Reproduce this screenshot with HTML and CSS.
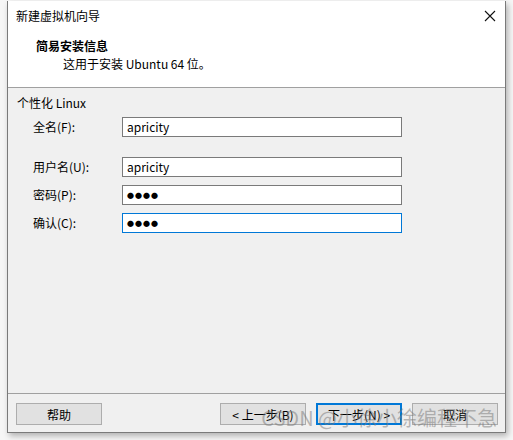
FILE: index.html
```html
<!DOCTYPE html>
<html>
<head>
<meta charset="utf-8">
<link rel="stylesheet" href="styles.css">
</head>
<body>
<div class="window">
  <div class="titlebar">
    <span class="title">新建虚拟机向导</span>
    <svg class="close" width="12" height="12" viewBox="0 0 12 12"><path d="M1 1L11 11M11 1L1 11" stroke="#111" stroke-width="1.1"/></svg>
  </div>
  <div class="header">
    <div class="h-title">简易安装信息</div>
    <div class="h-sub">这用于安装 Ubuntu 64 位。</div>
  </div>
  <div class="content">
    <div class="group">个性化 Linux</div>
    <div class="form">
      <label class="lbl">全名(F):</label><div class="field">apricity</div>
      <div class="spacer"></div>
      <label class="lbl">用户名(U):</label><div class="field">apricity</div>
      <label class="lbl">密码(P):</label><div class="field dots">●●●●</div>
      <label class="lbl">确认(C):</label><div class="field dots focus">●●●●</div>
    </div>
  </div>
  <div class="footer">
    <button class="btn">帮助</button>
    <div class="grow"></div>
    <button class="btn">&lt; 上一步(B)</button>
    <button class="btn primary">下一步(N) &gt;</button>
    <button class="btn">取消</button>
  </div>
  <div class="watermark">CSDN @小徐小徐编程不急</div>
</div>
</body>
</html>
```
FILE: styles.css
```css
html, body {
  margin: 0;
  padding: 0;
  background: #f6f6f6;
  width: 513px;
  height: 440px;
  overflow: hidden;
  font-family: "Noto Sans CJK SC", "Noto Sans", sans-serif;
  font-size: 12px;
  color: #000;
}
.window {
  position: relative;
  box-sizing: border-box;
  margin: 1px 0 0 7px;
  width: 499px;
  height: 432px;
  border: 1px solid #7a7a7a;
  border-top: none;
  background: #f0f0f0;
  display: flex;
  flex-direction: column;
  box-shadow: 2px 3px 6px rgba(0,0,0,0.28);
}
.titlebar {
  height: 30px;
  background: #fff;
  display: flex;
  align-items: center;
  padding: 0 9px 0 8px;
}
.title { flex: 1; line-height: 16px; }
.close { display: block; }
.header {
  background: #fff;
  height: 56px;
  border-bottom: 1px solid #a0a0a0;
  padding-left: 28px;
}
.h-title { font-weight: bold; line-height: 16px; margin-top: 7px; }
.h-sub { line-height: 16px; margin-top: 2px; padding-left: 27px; }
.content {
  flex: 1;
  padding: 7px 0 0 9px;
}
.group { line-height: 16px; }
.form {
  display: grid;
  grid-template-columns: 89px 280px;
  row-gap: 8px;
  margin-top: 6px;
  padding-left: 16px;
  align-items: center;
}
.spacer { grid-column: 1 / 3; height: 4px; }
.lbl { line-height: 16px; }
.field {
  box-sizing: border-box;
  height: 20px;
  border: 1px solid #7a7a7a;
  background: #fff;
  padding-left: 4px;
  line-height: 18px;
}
.dots { font-size: 7px; letter-spacing: 1px; line-height: 18px; }
.focus { border-color: #0078d7; }
.footer {
  height: 39px;
  border-top: 1px solid #a0a0a0;
  display: flex;
  align-items: flex-start;
  padding: 9px 7px 0 8px;
  box-sizing: border-box;
  gap: 10px;
}
.grow { flex: 1; }
.btn {
  box-sizing: border-box;
  width: 86px;
  height: 22px;
  border: 1px solid #adadad;
  background: #e1e1e1;
  font-family: inherit;
  font-size: 12px;
  padding: 0;
  color: #000;
}
.primary { border: 2px solid #0078d7; }
.watermark {
  position: absolute;
  right: 8px;
  bottom: 2px;
  font-size: 20px;
  line-height: 24px;
  color: rgba(120,120,120,0.5);
  letter-spacing: 0;
}
```
